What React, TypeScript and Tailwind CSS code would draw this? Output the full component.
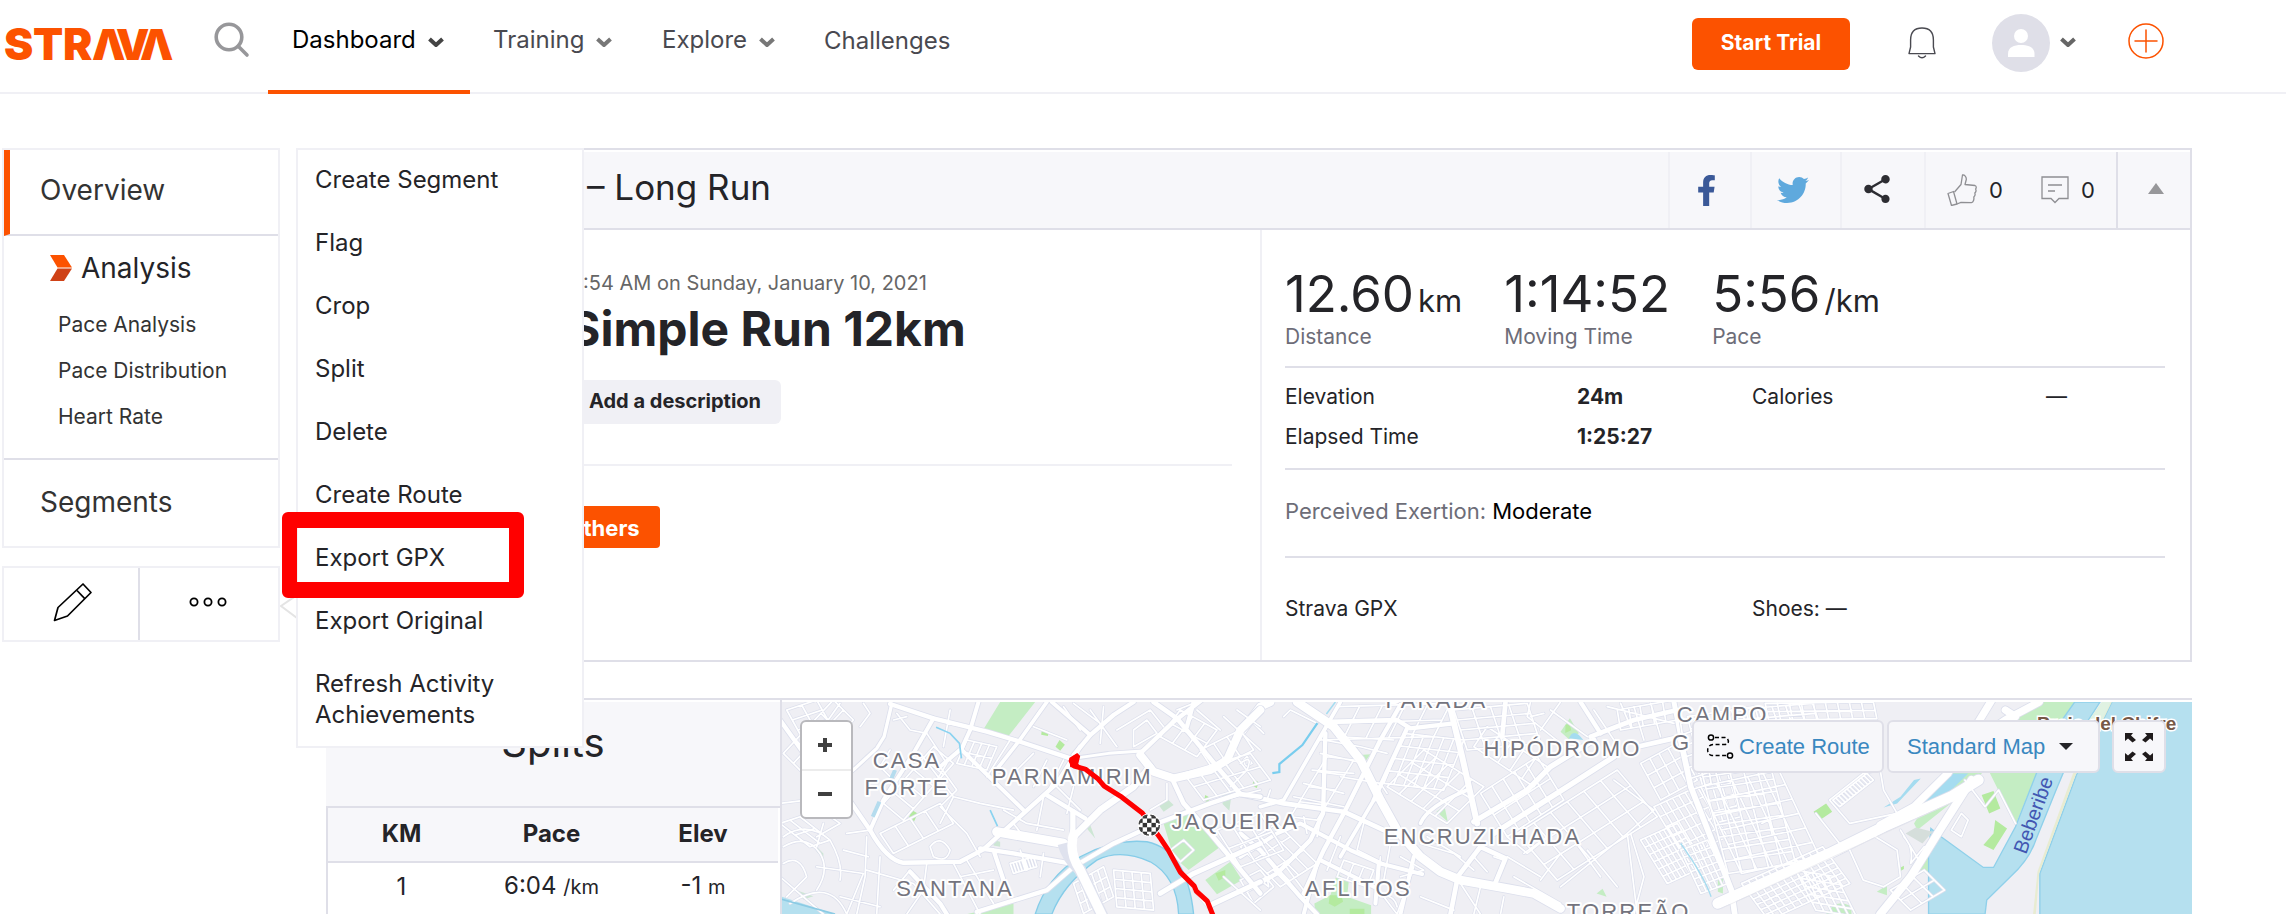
import React from "react";
import { FaFacebookF, FaTwitter } from "react-icons/fa";
import { IoMdShare } from "react-icons/io";

/* ---------- icons ---------- */

function Logo() {
  return (
    <svg
      viewBox="0 0 176 44"
      className="h-11 w-[176px]"
      fill="#fc5200"
      stroke="#fff"
      strokeWidth="2"
      paintOrder="stroke"
      fontWeight="900"
    >
      <text x="2 31 61" y="38" fontSize="44" stroke="none">
        STR
      </text>
      <text x="90 114 138" y="38" fontSize="42">
        ΛVΛ
      </text>
    </svg>
  );
}

function Chevron({ className = "" }: { className?: string }) {
  return (
    <svg viewBox="0 0 16 12" className={`h-3 w-4 ${className}`} fill="none" stroke="currentColor" strokeWidth="4">
      <path d="M1.5 2 L8 8 L14.5 2" strokeLinejoin="round" />
    </svg>
  );
}

function SearchIcon() {
  return (
    <svg viewBox="0 0 36 36" className="h-9 w-9" fill="none" stroke="#97979a" strokeWidth="3.6" strokeLinecap="round">
      <circle cx="15" cy="15" r="12.8" />
      <path d="M24.5 24.5 L33 33" />
    </svg>
  );
}

function BellIcon() {
  return (
    <svg viewBox="0 0 28 32" className="h-8 w-7" fill="none" stroke="#494950" strokeWidth="1.4" strokeLinejoin="round">
      <path d="M2.6 13 C2.6 5 7 1 14 1 C21 1 25.4 5 25.4 13 V20 L27 26.6 H1 L2.6 20 Z" />
      <path d="M10.5 29 Q14 32.5 17.5 29" strokeLinecap="round" />
    </svg>
  );
}

function AvatarIcon() {
  return (
    <svg viewBox="0 0 58 58" className="h-[58px] w-[58px]">
      <circle cx="29" cy="29" r="29" fill="#dfdfe8" />
      <circle cx="29" cy="22" r="7" fill="#fff" />
      <path d="M16 43 V40 C16 33 22 31 29 31 C36 31 42.500 33 42.500 40 V43 Z" fill="#fff" />
    </svg>
  );
}

function PlusCircle() {
  return (
    <svg viewBox="0 0 36 36" className="h-9 w-9" fill="none" stroke="#fc5200" strokeWidth="1.5" strokeLinecap="round">
      <circle cx="18" cy="18" r="17" />
      <path d="M18 7 V29 M7 18 H29" />
    </svg>
  );
}

function ThumbIcon() {
  return (
    <svg viewBox="0 0 30 32" className="h-8 w-[30px]" fill="none" stroke="#8f8f93" strokeWidth="1.3" strokeLinejoin="round">
      <path d="M1 19.500 L6.500 17.500 L10 30 L4.500 31.500 Z" />
      <path d="M7.500 18 L14 10.500 L15.500 1 C17.500 0.500 19.500 3 19.300 5.500 L18 10.500 L28 11.500 C29.500 12 29.500 14 28.600 15 C29.400 16.500 29 18 27.800 19 C28.400 20.500 28 22 26.800 23 C27.200 25 26.500 28.500 24.500 28.600 L14 28.400 L10 30" />
    </svg>
  );
}

function CommentIcon() {
  return (
    <svg viewBox="0 0 28 28" className="h-7 w-7" fill="none" stroke="#8f8f93" strokeWidth="1.3">
      <path d="M1 1 H27 V22.500 H18 L14 26.500 L10 22.500 H1 Z" />
      <path d="M7 9 H21 M7 15 H14" />
    </svg>
  );
}

function AnalysisMark() {
  return (
    <svg viewBox="0 0 22 26" className="h-[26px] w-[22px]">
      <path d="M0 0 H14 L22 12.500 H7.500 Z" fill="#fc5200" />
      <path d="M7.500 13.500 H22 L14 26 H0 Z" fill="#cf4217" />
    </svg>
  );
}

function PencilIcon() {
  return (
    <svg viewBox="0 0 40 40" className="h-10 w-10" fill="none" stroke="#000" strokeWidth="1.7" strokeLinejoin="round">
      <path d="M30 2 L38 10.500 L14.500 34 L1.500 38.500 L5 25.500 Z" />
      <path d="M24 8.500 L32 16.800" />
    </svg>
  );
}

function DotsIcon() {
  return (
    <svg viewBox="0 0 38 12" className="h-3 w-[38px]" fill="none" stroke="#000" strokeWidth="1.8">
      <circle cx="5" cy="6" r="3.600" />
      <circle cx="19" cy="6" r="3.600" />
      <circle cx="33" cy="6" r="3.600" />
    </svg>
  );
}

function RouteIcon() {
  return (
    <svg viewBox="0 0 28 26" className="h-[26px] w-7" fill="none" stroke="#000" strokeWidth="1.5">
      <circle cx="5" cy="3.500" r="2.600" />
      <path d="M9 3.500 H19 C23 4 24 10.500 19 10.500 H7 C0 11 0 20.500 6 21.500 H20" strokeDasharray="4 2.500" />
      <circle cx="24" cy="21.500" r="2.600" />
    </svg>
  );
}

function ExpandIcon() {
  const arrow = "M0 0 H8 L6 2.500 L11 7 L7.500 9.500 L3 5.500 L0 8 Z";
  return (
    <svg viewBox="0 0 28 28" className="h-7 w-7" fill="#1f1b1c">
      <path d={arrow} />
      <path d={arrow} transform="translate(28 0) scale(-1 1)" />
      <path d={arrow} transform="translate(0 28) scale(1 -1)" />
      <path d={arrow} transform="translate(28 28) scale(-1 -1)" />
    </svg>
  );
}

/* ---------- map ---------- */

/* Path of a street grid: origin, first direction (n lines across it), second direction (m lines). */
function grid(x: number, y: number, ax: number, ay: number, bx: number, by: number, n: number, m: number) {
  const out: string[] = [];
  for (let i = 0; i <= n; i++) {
    const t = i / n;
    out.push(`M${x + ax * t} ${y + ay * t}l${bx} ${by}`);
  }
  for (let j = 0; j <= m; j++) {
    const t = j / m;
    out.push(`M${x + bx * t} ${y + by * t}l${ax} ${ay}`);
  }
  return out.join("");
}

type Road = [string, number];

const westMinor = [
  grid(10, 190, 150, -160, 60, 60, 4, 2),
  grid(20, 60, 90, -30, 50, 90, 2, 3),
  "M180 40 L130 110 L200 160 M250 40 L270 70 L240 110 M350 70 L390 120 L440 130 M340 90 L380 80",
  grid(310, 340, 150, -170, 60, 50, 5, 1),
  "M330 180 L300 230 L350 280 M420 190 L520 320 L600 340 L700 360 M480 230 L530 300 L480 350 L560 430 M520 320 L480 400 M440 130 L500 220 L470 270",
  grid(560, 150, 90, 20, -30, 70, 4, 2),
  "M510 60 L490 170 M500 100 L560 110 M690 150 L620 260 M760 190 L700 250 M800 210 L760 290 M850 210 L800 310 M740 120 L780 60 M760 110 L860 150",
  grid(0, 400, 60, -20, 90, 70, 2, 2),
  "M10 440 Q80 390 150 450 Q190 520 180 570 M10 470 Q80 430 120 490 Q150 540 110 600 M10 520 Q60 490 80 560 L20 620 M30 640 Q150 560 200 672 M0 560 L130 672 M110 530 L250 550 L200 672 M130 400 L110 470 M0 340 L80 330 L180 400 L110 440",
  "M260 440 L255 560 L230 672 M300 500 L290 672 M260 540 L400 580 L480 672 M200 430 L270 420 M190 480 L265 500 M390 540 L340 600 M440 520 L430 600 L380 672 M180 620 L300 650",
  grid(300, 430, 180, -90, 40, 60, 4, 1),
  "M450 470 Q480 430 510 480 Q500 520 460 500 Z M560 430 L600 500 M520 520 L600 672 M560 510 L640 640 M540 560 L640 540",
  grid(690, 520, 70, -20, 10, 30, 8, 1),
  "M670 360 L740 400 L850 420 M700 400 L730 440 M880 290 L860 370 M790 320 L770 420 M820 280 L900 360 M720 480 L740 540 M790 490 L780 560",
  grid(880, 580, 90, -50, 30, 90, 5, 3),
  grid(1000, 540, 110, 10, 10, 110, 4, 4),
  "M930 60 L1010 170 M970 50 L960 160 M1010 120 L1110 60 L1150 110 M1060 120 L1100 90 L1130 130 L1060 170 Z M880 40 L960 100 M850 50 L900 120",
  grid(1200, 60, 110, 60, -60, 80, 3, 2),
  grid(1210, 250, 200, -60, 60, 80, 5, 2),
  grid(1260, 180, 120, -60, 40, 60, 3, 1),
  "M1250 60 L1320 120 M1190 60 L1240 40 M1330 80 L1440 180 M1370 60 L1440 110 M1380 220 Q1420 190 1400 240 L1350 290 M1290 340 L1440 300 M1330 400 L1440 420 M1160 280 L1160 330 L1110 360",
  grid(1310, 420, 130, -50, 70, 110, 3, 2),
  "M1170 480 L1210 450 L1240 480 L1200 515 Z M1240 600 L1300 672 M1330 560 L1440 660",
].join("");

const westMajor: Road[] = [
  ["M330 42 L460 85 L620 125 L720 155 L870 205", 13],
  ["M335 42 L312 140 L290 175 L225 235 L170 280", 10],
  ["M460 85 L400 190 L310 330 L270 420", 12],
  ["M595 36 L570 120 L545 175 L480 230", 12],
  ["M545 180 L730 360", 12],
  ["M880 195 L930 135 L1000 75 L1060 36", 13],
  ["M880 205 L985 190 L1085 183", 9],
  ["M815 36 L930 135", 12],
  ["M800 36 L715 155 L640 250", 11],
  ["M1440 60 L1380 120 L1340 210 L1290 240 L1180 265 L1120 245 L1080 195", 24],
  ["M1080 190 L1180 95 L1290 10 M1240 36 L1220 110", 13],
  ["M1120 36 L1190 85 L1310 230 L1380 312 L1440 320", 14],
  ["M1175 265 L1210 340 L1290 430 L1440 610", 14],
  ["M880 440 L960 360 L1060 290 L1110 230", 20],
  ["M878 450 L878 365", 16],
  ["M800 315 L915 385", 13],
  ["M0 90 L100 230 L180 290 L270 420 Q320 510 370 518 L540 515 L610 478 L730 370 L830 280 L900 170", 13],
  ["M650 425 L850 460", 28],
  ["M600 475 L700 490 L860 518 M640 480 L680 600", 13],
  ["M590 665 L800 600 L880 530 L1000 460 L1130 400 L1290 340 L1380 310", 13],
  ["M1140 610 L1240 550 L1440 460 M1290 645 L1440 575", 15],
  ["M390 545 L480 640 L500 672", 13],
];

const eastMinor = [
  grid(290, 50, 340, -10, -50, 100, 5, 2),
  grid(260, 200, 80, 10, -110, 180, 1, 4),
  "M250 150 L360 170 L440 190 M240 190 L350 215 M215 240 L340 250 M190 280 L310 310 M160 320 L310 350 M290 140 L460 150 M300 260 L420 280 L440 310",
  grid(490, 130, 180, 20, -60, 150, 6, 4),
  grid(440, 290, 180, 110, 110, -110, 5, 3),
  grid(640, 60, 220, -20, 40, 120, 4, 4),
  grid(700, 170, 180, 120, 40, -60, 5, 1),
  grid(720, 310, 170, -110, 80, 130, 5, 2),
  grid(830, 430, 300, -190, 120, 140, 6, 3),
  "M870 36 L860 80 L960 160 M870 80 L910 70 M960 36 L900 120 M930 60 L1040 140 M1060 60 L1120 150 M1100 50 L1300 100 M1140 40 L1170 110 M1180 50 L1210 150 M1230 40 L1260 140",
  grid(1130, 60, 170, -30, 10, 60, 5, 1),
  grid(1200, 220, 110, -60, 60, 110, 4, 3),
  grid(1240, 350, 130, -60, 90, 150, 7, 5),
  grid(1200, 450, 110, -50, 80, 130, 8, 6),
  grid(1360, 200, 80, -20, 60, 200, 3, 6),
  "M1120 270 L1240 360 L1160 430 L960 590 M1160 430 L1190 672 M1170 430 L1210 560 L1180 672 M1040 480 L1130 590 M960 490 L900 570 M1000 450 L1080 560 M850 490 L920 440 M800 440 L860 490 L910 450",
  grid(0, 470, 110, -70, 120, 120, 4, 3),
  "M0 570 L60 540 L100 590 L40 640 Z M60 570 L80 560 L85 590 Z M100 540 L230 672 M130 520 L190 600 M200 430 L190 380 M240 390 L230 440 M300 440 L260 540 M370 400 L350 480 L430 520 M420 500 L410 620 M450 460 L430 570 M480 500 L550 540 L480 560",
  "M540 460 L640 490 L700 540 M560 440 L660 500 M700 500 L740 545 M760 500 L790 510 L760 580 M430 620 L470 672 M520 530 L470 672 M420 620 Q460 610 470 650 M540 620 L640 660 M660 580 L720 672 M720 590 L700 672 M790 620 L780 672",
  "M10 210 L20 200 L35 220 L15 230 Z M40 100 L70 130 M130 80 L150 60 L230 100 M80 330 L90 300",
  grid(310, 510, 90, 30, -20, 50, 3, 1),
  "M820 560 L960 640 M800 500 L900 560",
].join("");

const eastMajor: Road[] = [
  ["M170 36 L280 110 L360 210 L420 330 L470 420 L540 500 L600 545 L660 570 L800 595 L880 610 L960 655", 26],
  ["M0 130 L60 50 L90 36", 24],
  ["M300 36 L130 330 L60 350", 11],
  ["M255 130 L248 370 L210 450 L110 550 L20 600", 13],
  ["M0 312 L130 340 L310 365 L430 420", 14],
  ["M500 115 L400 330 M480 45 L420 150 L310 370 L250 480 L190 610", 13],
  ["M270 95 L470 90 L510 115 L640 100", 13],
  ["M625 36 L665 200 L710 400", 18],
  ["M795 36 L785 140", 14],
  ["M400 330 L300 500 M540 400 Q560 350 680 300", 11],
  ["M700 395 L860 300 L930 230 L1060 150", 16],
  ["M760 430 L980 290 L1120 200", 16],
  ["M1020 36 L1080 130", 13],
  ["M1050 140 L1180 90 L1310 60 M1190 170 L1300 145", 14],
  ["M1300 36 L1350 290 L1440 510", 15],
  ["M0 430 L60 480 L180 620 L230 672", 13],
  ["M0 500 L110 430 L180 400 L330 480 L420 520 L545 552", 12],
  ["M190 672 L230 520 M240 510 L400 590", 12],
  ["M655 555 L720 470 M720 470 L795 505 L760 590", 14],
  ["M650 570 L630 672", 14],
  ["M520 500 L480 672 M415 520 L405 640", 12],
];

const coastMinor = [
  grid(20, 80, 200, -30, 120, 470, 5, 13),
  grid(150, 60, 240, -20, 20, 60, 6, 2),
  grid(60, 290, 230, -50, 120, 260, 5, 6),
  grid(250, 40, 320, -4, 10, 50, 9, 2),
  grid(0, 480, 80, -30, 60, 130, 5, 6),
  grid(180, 580, 240, -110, 80, 110, 12, 7),
  grid(340, 540, 120, 20, 60, 120, 5, 5),
  grid(620, 600, 100, -60, 60, 60, 3, 2),
  "M440 330 L540 250 L590 240 L600 300 L640 370 L500 400 Z M400 370 L470 460 M470 470 L560 430 L640 480 L650 560 L600 590 M500 480 L540 570 L600 590 M840 270 L900 350 L940 300 L990 400 M800 420 L830 370 L850 390 L830 440 Z",
  grid(450, 330, 100, -80, 20, 20, 12, 1),
  grid(0, 100, 30, 200, 60, -20, 6, 1),
  "M240 400 L260 390 L270 430 M660 440 Q690 470 680 520 L720 470 M650 420 L710 520",
].join("");

const coastMajor: Road[] = [
  ["M0 150 L30 290 L150 600 L160 672", 17],
  ["M110 640 L440 490 L600 410 L800 320 L880 270", 32],
  ["M590 405 L690 350 L790 250 L860 130 L920 30", 22],
  ["M860 270 L760 430 L680 560 L590 672", 24],
  ["M830 180 L960 90 L1060 36 M960 60 L990 80", 22],
];

function Roads({ minor, major }: { minor: string; major: Road[] }) {
  return (
    <g fill="none" strokeLinejoin="round" strokeLinecap="round">
      <path d={minor} stroke="#dcdfec" strokeWidth="9" />
      {major.map(([d, w]) => (
        <path key={d} d={d} stroke="#dcdfec" strokeWidth={w + 5} />
      ))}
      <path d={minor} stroke="#fff" strokeWidth="5" />
      {major.map(([d, w]) => (
        <path key={d} d={d} stroke="#fff" strokeWidth={w} />
      ))}
    </g>
  );
}

const labels: [string, number, number][] = [
  ["CASA", 907, 768],
  ["FORTE", 907, 795],
  ["PARNAMIRIM", 1072, 784],
  ["SANTANA", 955, 896],
  ["JAQUEIRA", 1235, 829],
  ["PARADA", 1436, 708],
  ["HIPÓDROMO", 1562, 756],
  ["ENCRUZILHADA", 1482, 844],
  ["AFLITOS", 1358, 896],
  ["TORREÃO", 1628, 919],
  ["CAMPO", 1722, 722],
  ["G", 1681, 750],
];

function RouteMap() {
  return (
    <svg
      viewBox="782 702 1409 212"
      preserveAspectRatio="xMinYMin slice"
      className="absolute inset-0 h-full w-full"
      role="img"
      aria-label="Route map"
    >
      <rect x="782" y="702" width="1409" height="212" fill="#efeff4" />

      <g transform="translate(780 690) scale(.33333)">
        <path d="M660 36 H765 L685 138 L612 115 Z M1150 400 L1225 350 L1320 470 L1225 540 L1180 500 Z M1275 570 L1350 515 L1385 570 L1310 612 Z M560 672 L700 640 V672 Z" fill="#c4edc3" />
        <path d="M785 120 l22 4 l-4 14 l-20 -4 Z M838 150 l16 14 l-14 18 l-14 -12 Z M395 360 l18 10 l-12 26 l-16 -10 Z M1420 270 l14 6 l-6 16 l-12 -6 Z M1275 315 l14 8 l-6 14 l-12 -6 Z M1305 550 l30 -10 v20 l-20 12 Z" fill="#b4ea9f" />
        <path d="M1135 345 L1160 325 L1180 345 L1150 365 Z M1325 310 l30 -8 l-8 60 l-20 -20 Z M50 600 l50 18 l-30 10 Z M640 450 l20 5 v15 l-20 -4 Z M930 405 l15 40 l-25 -30 Z M110 470 l20 20 v15 l-20 -20 Z" fill="#cde6d4" />
        <path d="M0 618 L165 672 H0 Z" fill="#b5e0ef" />
      </g>
      <g transform="translate(1240 690) scale(.33333)">
        <path d="M222 640 L270 615 L290 550 L325 575 L320 620 L392 645 V672 H225 Z M960 125 L988 85 L1015 130 L985 148 Z M588 365 L612 348 L622 395 Z M360 195 l30 -2 l-16 22 Z M1068 610 l18 -14 l12 24 Z" fill="#c4edc3" />
        <path d="M328 656 h44 v16 h-44 Z M268 615 h35 l5 20 l-25 15 l-18 -10 Z M45 270 l10 8 l-6 16 l-12 -8 Z M975 105 l12 -6 l5 22 l-18 8 Z" fill="#b4ea9f" />
        <path d="M985 145 Q1000 110 1028 150 Z" fill="#a5dcf0" />
      </g>
      <g transform="translate(1680 690) scale(.33800 .33333)">
        <path d="M1060 36 H1165 L1100 130 L990 405 L905 230 L860 290 L700 420 L690 400 L720 350 L800 250 L880 150 Z M700 540 L735 480 V545 Z M430 672 Q460 620 505 650 V672 Z M110 560 l15 5 v45 l-15 -5 Z M580 605 l30 -20 v30 Z" fill="#c4edc3" />
        <path d="M740 415 L770 440 L895 532 H925 L990 410 L1050 255 L1100 130 L1165 36 H1240 L1180 130 L1110 300 L1050 450 Q1030 510 975 560 L905 630 L900 672 H733 V480 Z" fill="#b5e0ef" stroke="#8fd0ea" strokeWidth="4" />
        <path d="M1275 36 H1515 V672 H1062 V550 L1170 255 Z" fill="#b5e0ef" />
        <path d="M1275 36 L1170 255 L1062 550 V672" fill="none" stroke="#8fd0ea" strokeWidth="4" />
        <path d="M1275 36 L1168 255 L1060 550 L1050 672 H1042 L1055 545 L1160 250 L1262 36 Z" fill="#e8ecd2" />
        <path d="M1245 36 H1272 L1195 200 L1180 130 Z" fill="#e0f2e2" />
        <path d="M710 265 L640 340 L600 352 L650 320 L690 270 Z M850 250 L790 310 L715 355 L725 320 L790 250 Z" fill="#a5dcf0" />
        <path d="M890 315 L925 303 L945 355 L912 370 Z M895 465 L925 430 L930 390 L965 415 L925 480 Z M393 365 L430 340 L448 365 L412 390 Z M645 535 l15 -8 v10 l-10 6 Z" fill="#b4ea9f" />
        <path d="M665 430 L695 412 L745 425 L715 460 Z" fill="#d5dedb" />
      </g>

      <g transform="translate(780 690) scale(.33333)">
        <path d="M765 672 Q800 560 900 500 Q1000 445 1100 455 Q1220 480 1240 672 H1195 Q1190 560 1110 515 Q1020 475 950 510 Q850 580 815 672 Z" fill="#b5e0ef" stroke="#85cce8" strokeWidth="4" />
      </g>
      <g transform="translate(1240 690) scale(.33333)">
        <Roads minor={eastMinor} major={eastMajor} />
      </g>
      <g transform="translate(1680 690) scale(.33800 .33333)">
        <Roads minor={coastMinor} major={coastMajor} />
        <path d="M120 655 L440 505 L800 338" stroke="#e6e6ec" strokeWidth="2" fill="none" />
        <path d="M0 460 Q70 560 90 620" stroke="#a5dcf0" strokeWidth="4" fill="none" />
      </g>
      <g transform="translate(780 690) scale(.33333)">
        <Roads minor={westMinor} major={westMajor} />
        <path d="M850 460 Q860 500 900 540 L970 685" fill="none" stroke="#dfe2ee" strokeWidth="36" />
        <path d="M885 420 Q860 480 900 540 L970 685" fill="none" stroke="#fff" strokeWidth="28" />
        <path d="M468 112 L510 130 L538 160 L544 205 M630 360 L652 408" fill="none" stroke="#8ad3f0" strokeWidth="5" />
        <path d="M345 240 L330 275 M298 335 L278 380" fill="none" stroke="#b5dcee" strokeWidth="12" />
        <path d="M0 626 L165 672" fill="none" stroke="#8ccbe4" strokeWidth="5" />
      </g>
      <path d="M1317 723 L1302 745 L1279 764 V772 L1272 773" fill="none" stroke="#79cdee" strokeWidth="2.200" />
      <path d="M1335 702 L1326 714" fill="none" stroke="#a5dcf0" strokeWidth="1.500" />

      <g
        fontFamily="'Liberation Sans', Arial, sans-serif"
        fontSize="22"
        textAnchor="middle"
        fill="#74747e"
        stroke="#fff"
        strokeWidth="4"
        strokeLinejoin="round"
        paintOrder="stroke"
        className="tracking-widest"
      >
        {labels.map(([name, x, y]) => (
          <text key={name} x={x} y={y}>
            {name}
          </text>
        ))}
      </g>
      <g fontFamily="'Liberation Sans', Arial, sans-serif" fontSize="20">
        <text x="2036" y="730" fontSize="19" fontWeight="700" fill="#765847" stroke="#fff" strokeWidth="3" paintOrder="stroke">
          Praia del Chifre
        </text>
        <text transform="translate(2025 855) rotate(-70)" fill="#4257b2">
          Beberibe
        </text>
      </g>

      <path
        d="M1076 757 L1071 761 L1074 766 L1085 769 L1098 779 L1104 786 L1120 796 L1142 813 L1160 838 L1168 850 L1180 872 L1194 886 L1196 891 L1207 901 L1213 916"
        fill="none"
        stroke="#f00"
        strokeWidth="5"
        strokeLinejoin="round"
        strokeLinecap="round"
      />
      <path d="M1069 758 L1077 753 L1080 756 L1078 764 L1087 771 L1070 767 Z" fill="#f00" />
      <circle cx="1149" cy="825" r="11.500" fill="#fff" />
      <clipPath id="finish">
        <circle cx="1149" cy="825" r="10.500" />
      </clipPath>
      <g clipPath="url(#finish)" fill="#333">
        {[0, 1, 2, 3, 4].map((r) =>
          [0, 1, 2, 3, 4].map((c) =>
            (r + c) % 2 === 1 ? <rect key={`${r}${c}`} x={1138 + c * 4.4} y={814 + r * 4.4} width="4.4" height="4.4" /> : null,
          ),
        )}
      </g>
      <circle cx="1149" cy="825" r="10" fill="none" stroke="#444" strokeWidth="1.500" strokeDasharray="5 3" />
    </svg>
  );
}

/* ---------- page ---------- */

const menuItems = [
  "Create Segment",
  "Flag",
  "Crop",
  "Split",
  "Delete",
  "Create Route",
  "Export GPX",
  "Export Original",
  "Refresh Activity Achievements",
];

function Header() {
  return (
    <header className="flex h-[94px] items-start justify-between border-b-2 border-[#f0f0f5] pr-[122px]">
      <div className="flex h-[94px] items-start">
        <a href="#home" aria-label="Strava" className="mt-[22px] w-[214px] pl-[2px]">
          <Logo />
        </a>
        <button type="button" aria-label="Search" className="mt-[22px] mr-[18px]">
          <SearchIcon />
        </button>
        <nav className="flex h-[94px] items-start text-[24px] leading-[30px] text-[#494950]">
          <a href="#dashboard" className="flex h-[94px] w-[202px] items-start gap-3 border-b-4 border-[#fc5200] pt-[25px] pl-6 text-black">
            Dashboard <Chevron className="mt-3 text-[#444]" />
          </a>
          <a href="#training" className="flex w-[169px] items-start gap-3 pt-[25px] pl-[23px]">
            Training <Chevron className="mt-3 text-[#777]" />
          </a>
          <a href="#explore" className="flex w-[161px] items-start gap-3 pt-[25px] pl-[23px]">
            Explore <Chevron className="mt-3 text-[#777]" />
          </a>
          <a href="#challenges" className="pt-[26px] pl-6">
            Challenges
          </a>
        </nav>
      </div>
      <div className="flex items-center">
        <button type="button" className="mt-4 mr-[58px] h-[52px] w-[158px] rounded-md bg-[#fc5200] pb-[2px] text-[21px] font-bold text-white">
          Start Trial
        </button>
        <button type="button" aria-label="Notifications" className="mt-[14px] mr-[56px]">
          <BellIcon />
        </button>
        <button type="button" aria-label="Account" className="mt-[14px] mr-[52px] flex items-center gap-[10px]">
          <AvatarIcon />
          <Chevron className="text-[#666]" />
        </button>
        <button type="button" aria-label="Add" className="mt-[10px]">
          <PlusCircle />
        </button>
      </div>
    </header>
  );
}

function Sidebar() {
  return (
    <aside className="relative w-[278px] shrink-0 text-[#333]">
      <nav className="border-2 border-[#f0f0f5]">
        <a href="#overview" className="flex h-[86px] items-center border-b-2 border-l-[6px] border-b-[#dfdfe8] border-l-[#fc5200] pb-1 pl-[30px] text-[28px]">
          Overview
        </a>
        <div className="flex h-[224px] flex-col border-b-2 border-[#dfdfe8] pt-3">
          <a href="#analysis" className="flex items-center gap-[9px] pl-[46px] text-[28px] leading-10 text-[#242428]">
            <AnalysisMark /> Analysis
          </a>
          <div className="flex flex-col pt-[14px] pl-[54px] text-[21px] leading-[46px]">
            <a href="#pace-analysis">Pace Analysis</a>
            <a href="#pace-distribution">Pace Distribution</a>
            <a href="#heart-rate">Heart Rate</a>
          </div>
        </div>
        <a href="#segments" className="flex h-[86px] items-center pb-[2px] pl-9 text-[28px]">
          Segments
        </a>
      </nav>
      <div className="mt-[18px] grid h-[76px] grid-cols-[136fr_138fr] border-2 border-[#f0f0f5]">
        <button type="button" aria-label="Edit" className="flex items-center justify-center border-r-2 border-[#dfdfe8] pb-1 pl-1">
          <PencilIcon />
        </button>
        <button type="button" aria-label="More actions" className="flex items-center justify-center pr-[2px] pb-[5px]">
          <DotsIcon />
        </button>
      </div>

      <div className="absolute top-0 left-[294px] z-10 w-[288px] border-2 border-[#f0f0f5] bg-white pt-[14px] pb-[16px] text-[24px] leading-[31px] text-[#242428]">
        <svg viewBox="0 0 16 24" className="absolute top-[445px] -left-[18px] h-6 w-4" fill="#fff" stroke="#e4e4e4" strokeWidth="2">
          <path d="M17 0 L1 11 L17 23" />
        </svg>
        <ul className="flex flex-col gap-8">
          {menuItems.map((item) => (
            <li key={item} className="relative px-[17px]">
              <a href="#menu">{item}</a>
              {item === "Export GPX" && (
                <span className="pointer-events-none absolute -top-[30px] -left-4 h-[86px] w-[242px] rounded-md border-x-[15px] border-y-[16px] border-[#f00]" />
              )}
            </li>
          ))}
        </ul>
      </div>
    </aside>
  );
}

function SummaryHeader() {
  return (
    <div className="mt-[2px] flex h-[78px] items-stretch justify-between border-b-2 border-[#dfdfe8] bg-[#f7f7fa]">
      <h2 className="flex items-center pb-[6px] pl-[261px] text-[35px] text-[#242428]">– Long Run</h2>
      <div className="flex items-stretch text-[22px] text-[#242428]">
        <a href="#facebook" aria-label="Share on Facebook" className="flex w-[82px] items-center justify-center border-l-2 border-[#f0f0f5] pr-2">
          <FaFacebookF size={31} color="#3b5998" />
        </a>
        <a href="#twitter" aria-label="Share on Twitter" className="flex w-[90px] items-center justify-center border-l-2 border-[#f0f0f5] pr-[6px]">
          <FaTwitter size={32} color="#5fa9dd" />
        </a>
        <button type="button" aria-label="Share" className="flex w-[84px] items-center justify-center border-l-2 border-[#f0f0f5] pr-3 pb-[2px]">
          <IoMdShare size={34} color="#2d2d32" />
        </button>
        <div className="flex w-[192px] items-center border-l-2 border-[#f0f0f5] pl-[21px]">
          <button type="button" aria-label="Give kudos" className="flex items-center gap-3 pr-[38px]">
            <ThumbIcon /> 0
          </button>
          <button type="button" aria-label="Comments" className="flex items-center gap-3">
            <CommentIcon /> 0
          </button>
        </div>
        <button type="button" aria-label="Collapse" className="flex w-[74px] items-center justify-center border-l-2 border-[#dfdfe8] pb-[3px] pl-[3px]">
          <svg viewBox="0 0 16 11" className="h-[11px] w-4">
            <path d="M8 0 L16 11 H0 Z" fill="#97979a" />
          </svg>
        </button>
      </div>
    </div>
  );
}

function Stat({ value, unit, label }: { value: string; unit?: string; label: string }) {
  return (
    <li>
      <strong className="block text-[51px] leading-[60px] font-normal">
        {value}
        {unit && <span className="ml-1 text-[31px] leading-none">{unit}</span>}
      </strong>
      <span className="block leading-[26px] text-[#6d6d78]">{label}</span>
    </li>
  );
}

function Stats() {
  return (
    <div className="border-l-2 border-[#f0f0f5] pr-[25px] pl-[23px] text-[21px] leading-[40px] text-[#242428]">
      <ul className="flex gap-[42px] border-b-2 border-[#dfdfe8] pt-[34px] pb-4">
        <Stat value="12.60" unit="km" label="Distance" />
        <Stat value="1:14:52" label="Moving Time" />
        <Stat value="5:56" unit="/km" label="Pace" />
      </ul>
      <dl className="grid grid-cols-[292fr_175fr_294fr_119fr] border-b-2 border-[#dfdfe8] pt-[9px] pb-[11px]">
        <dt>Elevation</dt>
        <dd className="font-bold">24m</dd>
        <dt>Calories</dt>
        <dd>—</dd>
        <dt>Elapsed Time</dt>
        <dd className="font-bold">1:25:27</dd>
      </dl>
      <p className="border-b-2 border-[#dfdfe8] pt-[21px] pb-[25px] text-[22px] text-[#6d6d78]">
        Perceived Exertion: <span className="text-black">Moderate</span>
      </p>
      <div className="grid grid-cols-[467fr_413fr] pt-[31px]">
        <span>Strava GPX</span>
        <span>Shoes: —</span>
      </div>
    </div>
  );
}

function Summary() {
  return (
    <section className="border-2 border-l-0 border-[#dfdfe8]">
      <SummaryHeader />
      <div className="grid h-[430px] grid-cols-[934fr_930fr]">
        <div className="pr-7">
          <p className="pt-[38px] pl-[257px] text-[20px] leading-[30px] text-[#666]">:54 AM on Sunday, January 10, 2021</p>
          <h1 className="pb-[2px] pl-[243px] text-[48px] leading-[62px] font-bold text-[#242428]">Simple Run 12km</h1>
          <div className="border-b-2 border-[#f0f0f5] pt-[18px] pb-10 pl-[243px]">
            <button type="button" className="h-11 rounded-md bg-[#f0f0f5] px-5 pb-[2px] text-[20px] font-bold text-[#242428]">
              Add a description
            </button>
          </div>
          <div className="pt-10 pl-[224px]">
            <button type="button" className="h-[42px] rounded-sm bg-[#fc5200] px-5 pt-[2px] text-[22px] font-bold text-white">
              others
            </button>
          </div>
        </div>
        <Stats />
      </div>
    </section>
  );
}

function Splits() {
  return (
    <div className="w-[456px] shrink-0 border-r-2 border-[#dfdfe8] text-[#242428]">
      <h2 className="mt-[2px] flex h-[106px] items-center justify-center border-b-2 border-[#dfdfe8] bg-[#f7f7fa] pb-[22px] text-[40px]">
        Splits
      </h2>
      <table className="w-[452px] table-fixed border-l-2 border-[#dfdfe8] text-center text-[24px] leading-[32px]">
        <thead className="bg-[#f7f7fa]">
          <tr className="border-b-2 border-[#dfdfe8]">
            <th className="h-[54px] w-[148px] pb-[2px] font-bold">KM</th>
            <th className="pb-[2px] font-bold">Pace</th>
            <th className="w-[150px] pb-[2px] font-bold">Elev</th>
          </tr>
        </thead>
        <tbody>
          <tr>
            <td className="h-[52px] pb-1">1</td>
            <td className="pb-1">
              6:04 <span className="text-[20px]">/km</span>
            </td>
            <td className="pb-1">
              -1 <span className="text-[20px]">m</span>
            </td>
          </tr>
        </tbody>
      </table>
    </div>
  );
}

function MapPanel() {
  const button = "flex items-center rounded-md border-2 border-[#dfdfe8] bg-[#f7f7fa]";
  return (
    <div className="relative mt-[2px] flex min-w-0 flex-1 items-start justify-between overflow-hidden pt-[18px] pr-[26px] pl-[18px]">
      <RouteMap />
      <div className="relative flex h-[99px] w-[53px] flex-col rounded-md border-2 border-[#b9b9bd] bg-white text-[#404040]">
        <button type="button" aria-label="Zoom in" className="flex flex-1 items-center justify-center border-b-2 border-[#ececec] pr-[3px]">
          <svg viewBox="0 0 14 14" className="h-[14px] w-[14px]" stroke="currentColor" strokeWidth="4">
            <path d="M7 0 V14 M0 7 H14" />
          </svg>
        </button>
        <button type="button" aria-label="Zoom out" className="flex flex-1 items-center justify-center pr-[3px]">
          <svg viewBox="0 0 14 14" className="h-[14px] w-[14px]" stroke="currentColor" strokeWidth="4">
            <path d="M0 7 H14" />
          </svg>
        </button>
      </div>
      <div className="relative flex font-['Liberation_Sans',Arial,sans-serif] text-[22px] text-[#3a88c0]">
        <button type="button" className={`${button} mr-[3px] h-[53px] w-[192px] gap-[5px] pl-3 whitespace-nowrap`}>
          <RouteIcon /> Create Route
        </button>
        <button type="button" className={`${button} mr-3 h-[53px] w-[213px] gap-[14px] pl-[18px] whitespace-nowrap`}>
          Standard Map
          <svg viewBox="0 0 14 7" className="h-[7px] w-[14px]">
            <path d="M0 0 H14 L7 7 Z" fill="#242428" />
          </svg>
        </button>
        <button type="button" aria-label="Full screen" className={`${button} h-[53px] w-[54px] justify-center`}>
          <ExpandIcon />
        </button>
      </div>
    </div>
  );
}

export default function App() {
  return (
    <div className="h-screen overflow-hidden bg-white font-['Inter',sans-serif]">
      <Header />
      <div className="flex items-start pt-[54px] pr-[94px] pl-[2px]">
        <Sidebar />
        <main className="min-w-0 flex-1 pl-[46px]">
          <Summary />
          <section className="mt-9 flex h-[216px] items-stretch border-t-2 border-[#dfdfe8]">
            <Splits />
            <MapPanel />
          </section>
        </main>
      </div>
    </div>
  );
}
